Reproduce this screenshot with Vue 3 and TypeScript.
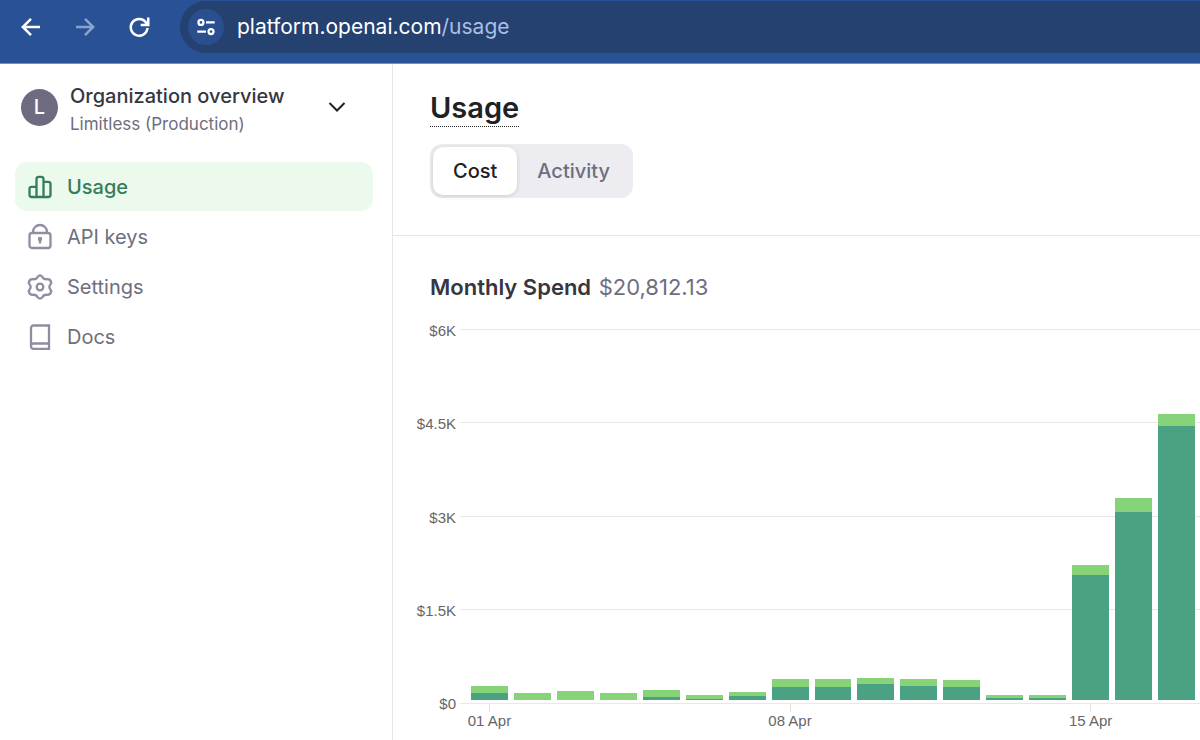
<script setup lang="ts">
import { computed, ref } from 'vue'

interface DaySpend {
  day: number
  base: number
  extra: number
}

const maxSpend = 6000
const axisLabels: string[] = ['$6K', '$4.5K', '$3K', '$1.5K', '$0']

const days: DaySpend[] = [
  { day: 1, base: 112, extra: 112 },
  { day: 2, base: 0, extra: 120 },
  { day: 3, base: 0, extra: 148 },
  { day: 4, base: 0, extra: 116 },
  { day: 5, base: 48, extra: 116 },
  { day: 6, base: 18, extra: 60 },
  { day: 7, base: 68, extra: 56 },
  { day: 8, base: 212, extra: 128 },
  { day: 9, base: 212, extra: 128 },
  { day: 10, base: 258, extra: 98 },
  { day: 11, base: 218, extra: 120 },
  { day: 12, base: 212, extra: 112 },
  { day: 13, base: 30, extra: 50 },
  { day: 14, base: 30, extra: 50 },
  { day: 15, base: 2006, extra: 158 },
  { day: 16, base: 3022, extra: 216 },
  { day: 17, base: 4402, extra: 194 },
]

const bars = computed(() =>
  days.map((d) => ({
    ...d,
    baseHeight: `${(d.base / maxSpend) * 100}%`,
    extraHeight: `${(d.extra / maxSpend) * 100}%`,
    label: d.day % 7 === 1 ? `${String(d.day).padStart(2, '0')} Apr` : '',
  })),
)

type View = 'Cost' | 'Activity'
const views: View[] = ['Cost', 'Activity']
const view = ref<View>('Cost')
</script>

<template>
  <div class="window">
    <header class="toolbar">
      <button class="tool" type="button" aria-label="Back">
        <svg viewBox="0 0 24 24"><path d="M21 12H4M12 3.8 3.8 12l8.200 8.200" /></svg>
      </button>
      <button class="tool dim" type="button" aria-label="Forward">
        <svg viewBox="0 0 24 24"><path d="M3 12h17M12 3.800 20.200 12 12 20.200" /></svg>
      </button>
      <button class="tool" type="button" aria-label="Reload">
        <svg viewBox="0 0 24 24">
          <path d="M19 7.500A8.400 8.400 0 1 0 20.500 13" />
          <path class="head" d="M22.500 2.500v8.800h-8.800v-2.500h3.800l2.500-2.500V2.500Z" />
        </svg>
      </button>
      <div class="omnibox">
        <button class="site" type="button" aria-label="Site information">
          <svg viewBox="0 0 24 24">
            <circle cx="6.500" cy="7" r="2.700" /><path d="M12 7h9.500M2.500 17H12" /><circle cx="17.500" cy="17" r="2.700" />
          </svg>
        </button>
        <a class="url" href="#usage">platform.openai.com<span>/usage</span></a>
      </div>
    </header>

    <div class="body">
      <aside class="sidebar">
        <button class="org" type="button">
          <span class="avatar">L</span>
          <span class="org-text">
            <span class="org-name">Organization overview</span>
            <span class="org-sub">Limitless (Production)</span>
          </span>
          <svg class="chevron" viewBox="0 0 20 20"><path d="m2.500 6 7.500 7.500L17.500 6" /></svg>
        </button>
        <nav class="nav">
          <a class="item active" href="#usage">
            <svg viewBox="0 0 24 24">
              <path d="M8.500 22H3.500a2 2 0 0 1-2-2v-6.200a2 2 0 0 1 2-2h5M8.500 22V4.200a2.300 2.300 0 0 1 2.300-2.300h2.400a2.300 2.300 0 0 1 2.300 2.300V22M15.500 6.800h4.700a2.300 2.300 0 0 1 2.300 2.300v10.600a2.300 2.300 0 0 1-2.300 2.300H8.500" />
            </svg>
            Usage
          </a>
          <a class="item" href="#keys">
            <svg viewBox="0 0 24 24">
              <rect x="1.500" y="8" width="21" height="15" rx="2.500" />
              <path d="M5 8V7a7 7 0 0 1 14 0v1" />
              <circle class="solid" cx="12" cy="14" r="2.200" /><path d="M12 15v3.500" />
            </svg>
            API keys
          </a>
          <a class="item" href="#settings">
            <svg viewBox="0 0 24 24">
              <path d="M9.700 1.700Q12-.8 14.300 1.700C15.400 3.800 16.800 4.500 19 4.200Q22.600 4 23.300 7.700C23.200 9 21.300 10 21.300 12S23.200 15 23.300 16.300Q22.600 20 19 19.800C16.800 19.500 15.400 20.200 14.300 22.300Q12 24.800 9.700 22.300C8.600 20.200 7.200 19.500 5 19.800Q1.400 20 .7 16.300C.8 15 2.700 14 2.700 12S.8 9 .7 7.700Q1.400 4 5 4.200C7.200 4.500 8.600 3.800 9.700 1.700Z" />
              <circle cx="12" cy="12" r="3.300" />
            </svg>
            Settings
          </a>
          <a class="item" href="#docs">
            <svg viewBox="0 0 24 24">
              <path d="M21 18.500V.500H5.500a2.500 2.500 0 0 0-2.500 2.500v18.500a2.300 2.300 0 0 0 2.500 2.300H21V18.500H5.500a2.500 2.500 0 0 0-2.500 2.500" />
            </svg>
            Docs
          </a>
        </nav>
      </aside>

      <main class="main">
        <section class="heading">
          <h1>Usage</h1>
          <div class="segments" role="group" aria-label="View">
            <button
              v-for="v in views"
              :key="v"
              type="button"
              :class="{ selected: v === view }"
              :aria-pressed="v === view"
              @click="view = v"
            >{{ v }}</button>
          </div>
        </section>
        <section class="spend">
          <h2>Monthly Spend <span>$20,812.13</span></h2>
          <div class="chart">
            <div class="y-axis">
              <span v-for="label in axisLabels" :key="label">{{ label }}</span>
            </div>
            <div class="plot">
              <div class="bars">
                <div v-for="bar in bars" :key="bar.day" class="bar">
                  <div class="extra" :style="{ height: bar.extraHeight }"></div>
                  <div class="base" :style="{ height: bar.baseHeight }"></div>
                </div>
              </div>
            </div>
            <div class="x-axis">
              <div v-for="bar in bars" :key="bar.day" class="tick" :class="{ marked: bar.label }">
                <span>{{ bar.label }}</span>
              </div>
            </div>
          </div>
        </section>
      </main>
    </div>
  </div>
</template>

<style>
body {
  margin: 0;
  background: #fff;
}
</style>

<style scoped>
.window {
  height: 100vh;
  overflow: hidden;
  display: flex;
  flex-direction: column;
  font-family: Inter, "Liberation Sans", sans-serif;
  color: #353740;
}
button {
  font: inherit;
  border: 0;
  padding: 0;
  background: none;
  cursor: pointer;
}
a {
  text-decoration: none;
}
svg {
  fill: none;
  stroke: currentColor;
  stroke-width: 2;
  flex: none;
}
.toolbar {
  flex: none;
  display: flex;
  align-items: center;
  box-sizing: border-box;
  height: 64px;
  padding: 1px 0 10px 19px;
  gap: 30px;
  background: #285196;
  border-bottom: 1px solid #7790bd;
}
.tool {
  display: flex;
  color: #fff;
}
.tool svg {
  width: 24px;
  height: 24px;
  stroke-width: 2.500;
}
.tool .head {
  fill: currentColor;
  stroke: none;
}
.tool.dim {
  color: #8ba2cc;
}
.omnibox {
  flex: 1;
  display: flex;
  align-items: center;
  gap: 13px;
  height: 52px;
  padding-left: 8px;
  margin-left: -1px;
  border-radius: 26px 0 0 26px;
  background: #24416f;
}
.site {
  display: grid;
  place-items: center;
  width: 36px;
  height: 36px;
  border-radius: 50%;
  background: #2a4f8f;
  color: #fff;
}
.site svg {
  width: 22px;
  height: 22px;
  stroke-width: 2.500;
}
.url {
  font-size: 21px;
  line-height: 28px;
  color: #fff;
}
.url span {
  color: #a9bfe6;
}
.body {
  flex: 1;
  min-height: 0;
  display: flex;
}
.sidebar {
  flex: none;
  box-sizing: border-box;
  width: 393px;
  padding: 15px 19px 0 15px;
  border-right: 1px solid #e5e5ea;
}
.org {
  display: flex;
  align-items: center;
  width: 100%;
  padding: 0 26px 0 6px;
  gap: 12px;
  text-align: left;
}
.avatar {
  display: grid;
  place-items: center;
  width: 37px;
  height: 37px;
  border-radius: 50%;
  background: #6e6b80;
  color: #fff;
  font-size: 20px;
  font-weight: 500;
}
.org-text {
  flex: 1;
  display: flex;
  flex-direction: column;
}
.org-name {
  font-size: 20px;
  line-height: 34px;
  font-weight: 500;
  color: #353740;
}
.org-sub {
  font-size: 17px;
  line-height: 22px;
  color: #6e6e80;
}
.chevron {
  width: 20px;
  height: 20px;
  color: #202123;
}
.nav {
  display: flex;
  flex-direction: column;
  gap: 1px;
  margin-top: 27px;
}
.item {
  display: flex;
  align-items: center;
  gap: 15px;
  height: 49px;
  padding-left: 13px;
  border-radius: 12px;
  font-size: 20px;
  color: #6e6e80;
}
.item svg {
  width: 24px;
  height: 24px;
  stroke-width: 2.300;
  color: #8e8ea0;
  overflow: visible;
}
.item .solid {
  fill: currentColor;
  stroke: none;
}
.item.active {
  background: #ecf9ed;
  color: #347d5c;
  font-weight: 500;
}
.item.active svg {
  color: #347d5c;
}
.main {
  flex: 1;
  min-width: 0;
}
.heading {
  display: flex;
  flex-direction: column;
  align-items: flex-start;
  gap: 17px;
  padding: 26px 37px 37px;
  border-bottom: 1px solid #e5e5ea;
}
h1 {
  margin: 0;
  font-size: 29px;
  line-height: 36px;
  font-weight: 600;
  color: #202123;
  border-bottom: 1px dotted #202123;
}
.segments {
  display: flex;
  padding: 3px;
  border-radius: 12px;
  background: #ececf1;
}
.segments button {
  height: 48px;
  padding: 0 20px;
  border-radius: 10px;
  font-size: 20px;
  font-weight: 500;
  color: #6e6e80;
}
.segments .selected {
  background: #fff;
  color: #202123;
  box-shadow: 0 1px 4px rgba(32, 33, 35, 0.16);
}
.spend {
  padding-top: 35px;
}
h2 {
  margin: 0 37px 26px;
  font-size: 22px;
  line-height: 32px;
  font-weight: 600;
  color: #353740;
}
h2 span {
  padding-left: 2px;
  font-weight: 400;
  color: #6e6e80;
}
.chart {
  display: grid;
  grid-template-columns: 67px 1fr;
  grid-template-rows: 375px auto;
  font-family: "Liberation Sans", Arial, sans-serif;
  font-size: 15px;
  line-height: 18px;
  color: #666;
}
.y-axis {
  display: flex;
  flex-direction: column;
  justify-content: space-between;
  align-items: flex-end;
  margin: -7px 0 -9px;
  padding-right: 4px;
}
.plot {
  background: repeating-linear-gradient(#e8e8e8 0 1px, transparent 1px 93px, transparent 93px calc((100% - 1px) / 4));
}
.bars {
  display: flex;
  gap: 6px;
  height: 374px;
  box-sizing: border-box;
  padding: 0 5px 0 11px;
  margin-top: -3px;
}
.bar {
  flex: 1;
  display: flex;
  flex-direction: column;
  justify-content: flex-end;
}
.extra {
  background: #87d379;
}
.base {
  background: #4ba282;
}
.x-axis {
  grid-column: 2;
  display: flex;
  gap: 6px;
  padding: 0 5px 0 11px;
}
.tick {
  flex: 1;
  display: flex;
  flex-direction: column;
  align-items: center;
  width: 0;
  white-space: nowrap;
}
.tick.marked::before {
  content: "";
  width: 1px;
  height: 8px;
  background: #e0e0e0;
}
</style>
